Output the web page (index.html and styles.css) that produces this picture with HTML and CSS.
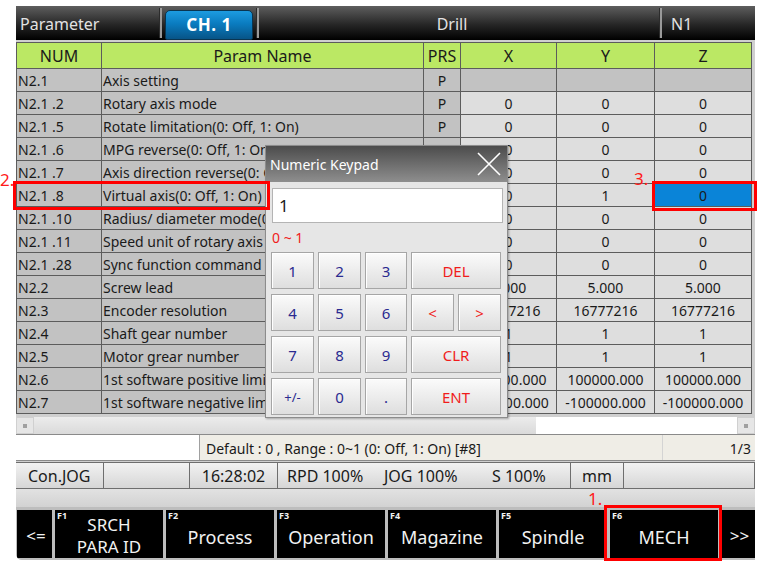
FILE: index.html
```html
<!DOCTYPE html>
<html lang="en">
<head>
  <meta charset="UTF-8">
  <title>Parameter - CH. 1</title>
  <link rel="stylesheet" href="styles.css">
</head>
<body>

  <div class="screen">
    <div class="titlebar">
      <span class="t-name">Parameter</span>
      <span class="sep"></span>
      <span class="tab">CH. 1</span>
      <span class="sep"></span>
      <span class="t-mode">Drill</span>
      <span class="sep"></span>
      <span class="t-prog">N1</span>
    </div>

    <div class="params">
      <div class="hd">NUM</div><div class="hd">Param Name</div><div class="hd">PRS</div><div class="hd">X</div><div class="hd">Y</div><div class="hd">Z</div>

      <div class="num">N2.1</div><div class="name">Axis setting</div><div class="prs">P</div><div class="val empty"></div><div class="val empty"></div><div class="val empty"></div>
      <div class="num">N2.1 .2</div><div class="name">Rotary axis mode</div><div class="prs">P</div><div class="val">0</div><div class="val">0</div><div class="val">0</div>
      <div class="num">N2.1 .5</div><div class="name">Rotate limitation(0: Off, 1: On)</div><div class="prs">P</div><div class="val">0</div><div class="val">0</div><div class="val">0</div>
      <div class="num">N2.1 .6</div><div class="name">MPG reverse(0: Off, 1: On)</div><div class="prs">P</div><div class="val">0</div><div class="val">0</div><div class="val">0</div>
      <div class="num">N2.1 .7</div><div class="name">Axis direction reverse(0: Off, 1: On)</div><div class="prs">P</div><div class="val">0</div><div class="val">0</div><div class="val">0</div>
      <div class="num">N2.1 .8</div><div class="name">Virtual axis(0: Off, 1: On)</div><div class="prs">P</div><div class="val">0</div><div class="val">1</div><div class="val sel">0</div>
      <div class="num">N2.1 .10</div><div class="name">Radius/ diameter mode(0: Off, 1: On)</div><div class="prs">P</div><div class="val">0</div><div class="val">0</div><div class="val">0</div>
      <div class="num">N2.1 .11</div><div class="name">Speed unit of rotary axis</div><div class="prs">P</div><div class="val">0</div><div class="val">0</div><div class="val">0</div>
      <div class="num">N2.1 .28</div><div class="name">Sync function command setting</div><div class="prs">P</div><div class="val">0</div><div class="val">0</div><div class="val">0</div>
      <div class="num">N2.2</div><div class="name">Screw lead</div><div class="prs">P</div><div class="val">5.000</div><div class="val">5.000</div><div class="val">5.000</div>
      <div class="num">N2.3</div><div class="name">Encoder resolution</div><div class="prs">P</div><div class="val">16777216</div><div class="val">16777216</div><div class="val">16777216</div>
      <div class="num">N2.4</div><div class="name">Shaft gear number</div><div class="prs">P</div><div class="val">1</div><div class="val">1</div><div class="val">1</div>
      <div class="num">N2.5</div><div class="name">Motor grear number</div><div class="prs">P</div><div class="val">1</div><div class="val">1</div><div class="val">1</div>
      <div class="num">N2.6</div><div class="name">1st software positive limit</div><div class="prs"></div><div class="val">100000.000</div><div class="val">100000.000</div><div class="val">100000.000</div>
      <div class="num">N2.7</div><div class="name">1st software negative limit</div><div class="prs"></div><div class="val">-100000.000</div><div class="val">-100000.000</div><div class="val">-100000.000</div>
    </div>

    <div class="hscroll">
      <span class="arrow"></span>
      <span class="thumb"></span>
      <span class="track"></span>
      <span class="arrow"></span>
    </div>

    <div class="info">
      <div class="info-input"></div>
      <div class="info-text">Default : 0 , Range : 0~1 (0: Off, 1: On) [#8]</div>
      <div class="info-page">1/3</div>
    </div>

    <div class="status">
      <div class="st st-mode">Con.JOG</div>
      <div class="st st-blank"></div>
      <div class="st st-time">16:28:02</div>
      <div class="st st-feed"><span class="rpd">RPD 100%</span><span class="jog">JOG 100%</span><span>S 100%</span></div>
      <div class="st st-unit">mm</div>
      <div class="st st-rest"></div>
    </div>

    <div class="msgbar"></div>

    <div class="fkeys">
      <div class="fk fk-arrow">&lt;=</div>
      <div class="fk"><span class="fno">F1</span><span class="two">SRCH<br>PARA ID</span></div>
      <div class="fk"><span class="fno">F2</span>Process</div>
      <div class="fk"><span class="fno">F3</span>Operation</div>
      <div class="fk"><span class="fno">F4</span>Magazine</div>
      <div class="fk"><span class="fno">F5</span>Spindle</div>
      <div class="fk"><span class="fno">F6</span>MECH</div>
      <div class="fk fk-arrow fk-last">&gt;&gt;</div>
    </div>
  </div>

  <div class="keypad">
    <div class="kp-title">
      <span>Numeric Keypad</span>
      <svg class="kp-close" width="26" height="26" viewBox="0 0 26 26">
        <path d="M2 2 L24 24 M24 2 L2 24" stroke="#fff" stroke-width="1.6" fill="none"/>
      </svg>
    </div>
    <div class="kp-body">
      <div class="kp-input">1</div>
      <div class="kp-range">0 ~ 1</div>
      <div class="kp-keys">
        <button class="k">1</button><button class="k">2</button><button class="k">3</button><button class="k red wide">DEL</button>
        <button class="k">4</button><button class="k">5</button><button class="k">6</button><button class="k red">&lt;</button><button class="k red">&gt;</button>
        <button class="k">7</button><button class="k">8</button><button class="k">9</button><button class="k red wide">CLR</button>
        <button class="k small">+/-</button><button class="k">0</button><button class="k">.</button><button class="k red wide">ENT</button>
      </div>
    </div>
  </div>

  <span class="mark mark-2">2.</span>
  <div class="rbox rbox-2"></div>
  <span class="mark mark-3">3.</span>
  <div class="rbox rbox-3"></div>
  <span class="mark mark-1">1.</span>
  <div class="rbox rbox-1"></div>

</body>
</html>
```

FILE: styles.css
```css
* { box-sizing: border-box; margin: 0; padding: 0; }

body {
  font-family: "Noto Sans", "DejaVu Sans", sans-serif;
  background: #fff;
  color: #1a1a1a;
  width: 763px;
  height: 565px;
  overflow: hidden;
}

.screen {
  margin: 6px 0 0 16px;
  width: 739px;
  background: #cfcfcf;
  border-bottom-left-radius: 6px;
  overflow: hidden;
}

/* title bar */
.titlebar {
  height: 34px;
  display: flex;
  align-items: center;
  background: linear-gradient(#5e5e5e, #262626 55%, #000);
  color: #e2e2e2;
  font-size: 16px;
}

.t-name { width: 140px; padding-left: 4px; padding-top: 2px; }
.t-mode { flex-grow: 1; text-align: center; padding-right: 14px; padding-top: 2px; }
.t-prog { width: 90px; padding-left: 6px; padding-top: 2px; }

.sep {
  width: 3px;
  height: 30px;
  border-left: 1px solid #2c2c2c;
  border-right: 2px solid #9a9a9a;
  margin: 0 3px;
}

.tab {
  width: 88px;
  height: 30px;
  margin-top: 3px;
  border: 1px solid #0a3550;
  border-radius: 5px 5px 2px 2px;
  background: linear-gradient(#1d9be0, #0a7cc0 45%, #075487);
  color: #fff;
  font-size: 17px;
  font-weight: bold;
  text-align: center;
  line-height: 28px;
  letter-spacing: 0.5px;
}

/* parameter table */
.params {
  margin-top: 2px;
  width: 736px;
  display: grid;
  grid-template-columns: 84px 321px 36px 95px 97px 96px;
  grid-template-rows: 25px repeat(15, 22px);
  gap: 1px;
  padding: 1px;
  background: #5c5c5c;
  font-size: 14px;
  white-space: nowrap;
}

.params > div {
  overflow: hidden;
  line-height: 23px;
}

.hd {
  background: #bbe864;
  text-align: center;
  font-size: 16px;
  line-height: 27px !important;
}

.num { background: #c2c2c2; padding-left: 1px; }
.name { background: #c2c2c2; padding-left: 1px; }
.prs { background: #c2c2c2; text-align: center; }
.val { background: #dedede; text-align: center; }
.val.empty { background: #c2c2c2; }
.val.sel { background: #0a84d8; }

/* horizontal scroll */
.hscroll {
  height: 20px;
  display: flex;
  align-items: stretch;
  padding-top: 3px;
  width: 739px;
}

.hscroll .arrow {
  width: 18px;
  background: #e6e6e6;
  border: 1px solid #d0d0d0;
  position: relative;
}

.hscroll .arrow::after {
  content: "";
  position: absolute;
  left: 6px;
  top: 6px;
  width: 4px;
  height: 4px;
  background: #a0a0a0;
}

.hscroll .thumb { width: 502px; background: linear-gradient(#ececec, #dadada); }
.hscroll .track { flex-grow: 1; background: #fff; }

/* info row */
.info {
  height: 27px;
  display: flex;
  border-top: 1px solid #8a8a8a;
  border-bottom: 1px solid #8a8a8a;
  font-size: 14px;
  line-height: 27px;
}

.info-input { width: 184px; background: #fff; border-right: 1px solid #a0a0a0; }
.info-text { flex-grow: 1; background: #efede6; padding-left: 6px; border-right: 1px solid #d4d4d4; }
.info-page { width: 92px; background: #efede6; text-align: right; padding-right: 4px; }

/* status row */
.status {
  margin-top: 1px;
  height: 27px;
  display: flex;
  border: 1px solid #6e6e6e;
  border-left: none;
  font-size: 16px;
  line-height: 27px;
}

.st {
  background: linear-gradient(#f2f2f2, #d6d6d6);
  border-left: 1px solid #6e6e6e;
  white-space: nowrap;
}

.st-mode { width: 87px; padding-left: 12px; border-left: none; }
.st-blank { width: 86px; }
.st-time { width: 88px; text-align: center; }
.st-feed { width: 293px; padding-left: 9px; }
.st-feed span { display: inline-block; }
.st-feed .rpd { width: 97px; }
.st-feed .jog { width: 108px; }
.st-unit { width: 53px; text-align: center; }
.st-rest { flex-grow: 1; }

.msgbar {
  height: 18px;
  background: linear-gradient(#e2e2e2, #d2d2d2);
}

/* function keys */
.fkeys {
  height: 53px;
  display: flex;
  gap: 3px;
  padding: 3px 0 2px 1px;
  background: #bdbdbd;
}

.fk {
  position: relative;
  width: 108px;
  background: #000;
  color: #f2f2f2;
  font-size: 18px;
  display: flex;
  align-items: center;
  justify-content: center;
  padding-top: 6px;
}

.fk .fno {
  position: absolute;
  left: 2px;
  top: 0;
  font-size: 9px;
  font-weight: bold;
  line-height: 11px;
}

.fk .two {
  text-align: center;
  line-height: 22px;
  font-size: 17px;
  margin-top: -3px;
}

.fk-arrow { width: 35px; padding-top: 2px; padding-left: 3px; font-size: 17px; }
.fk-last { flex-grow: 1; width: 32px; }

/* numeric keypad dialog */
.keypad {
  position: absolute;
  left: 265px;
  top: 145px;
  width: 243px;
  height: 273px;
  background: #e6e6e6;
  border: 1px solid #8c8c8c;
  box-shadow: 1px 1px 2px rgba(0, 0, 0, 0.3);
}

.kp-title {
  height: 36px;
  display: flex;
  align-items: center;
  justify-content: space-between;
  padding: 0 5px 0 4px;
  background: linear-gradient(#4c4c4c, #8e8e8e);
  color: #fff;
  font-size: 14px;
}

.kp-close { display: block; }

.kp-body { padding: 6px 5px 0 5px; }

.kp-input {
  height: 35px;
  margin-left: 1px;
  width: 231px;
  background: #fff;
  border: 1px solid #b4b4b4;
  font-size: 17px;
  line-height: 33px;
  padding-left: 6px;
}

.kp-range {
  color: #f01c1c;
  font-size: 14px;
  height: 29px;
  line-height: 29px;
  padding-left: 1px;
}

.kp-keys {
  display: grid;
  grid-template-columns: 43px 43px 42px 43px 43px;
  grid-template-rows: repeat(4, 37px);
  gap: 5px 4px;
}

.k {
  font-family: "Noto Sans", "DejaVu Sans", sans-serif;
  font-size: 15px;
  color: #2a2a90;
  background: linear-gradient(#fbfbfb, #dedede);
  border: 1px solid #a6a6a6;
  box-shadow: inset 1px 1px 0 #fff;
}

.k.small { font-size: 13px; }
.k.red { color: #f01c1c; }
.k.wide { grid-column: span 2; }

/* annotations */
.mark {
  position: absolute;
  color: #ff1a1a;
  font-size: 17px;
  line-height: 18px;
}

.mark-2 { left: 0; top: 171px; }
.mark-3 { left: 634px; top: 170px; }
.mark-1 { left: 588px; top: 490px; }

.rbox {
  position: absolute;
  border: 3px solid #ff0000;
}

.rbox-2 { left: 13px; top: 181px; width: 257px; height: 29px; }
.rbox-3 { left: 652px; top: 181px; width: 105px; height: 30px; }
.rbox-1 { left: 604px; top: 505px; width: 118px; height: 56px; }
```
